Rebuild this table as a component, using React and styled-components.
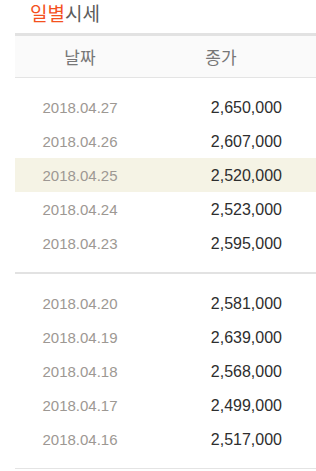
import React from "react";
import styled, { createGlobalStyle } from "styled-components";

const Global = createGlobalStyle`
  html, body { margin: 0; padding: 0; background: #fff; }
  body { font-family: "Liberation Sans", "Noto Sans CJK KR", sans-serif; }
`;

const Page = styled.div`
  padding-left: 15px;
  width: 301px;
`;

const Title = styled.h2`
  margin: 0;
  height: 33px;
  padding-left: 15px;
  font-family: "Noto Sans CJK KR", sans-serif;
  font-size: 19px;
  font-weight: 400;
  line-height: 26px;
  color: #5c5c5c;
  letter-spacing: 0;
`;

const Accent = styled.span`
  color: #f4511e;
`;

const Header = styled.div`
  display: grid;
  grid-template-columns: 130px 1fr;
  height: 41px;
  align-items: center;
  background: #fafafa;
  border-top: 3px solid #e2e2e2;
  border-bottom: 1px solid #e4e4e4;
`;

const HeadCell = styled.div`
  font-family: "Noto Sans CJK KR", sans-serif;
  font-size: 17px;
  line-height: 24px;
  color: #777;
  text-align: center;
  padding-right: ${(p) => (p.$right ? "19px" : "0")};
`;

const Group = styled.div`
  padding: 12px 0;
  border-bottom: ${(p) => (p.$last ? "1px solid #e4e4e4" : "2px solid #e2e2e2")};
`;

const Row = styled.div`
  display: grid;
  grid-template-columns: 130px 1fr;
  height: 34px;
  align-items: center;
  background: ${(p) => (p.$hl ? "#f5f3e5" : "transparent")};
`;

const DateCell = styled.div`
  font-size: 15px;
  color: #9d9893;
  text-align: center;
  line-height: 18px;
  padding-top: 1px;
`;

const PriceCell = styled.div`
  font-size: 16px;
  color: #2e2e2e;
  text-align: right;
  padding-right: 34px;
  line-height: 18px;
  padding-top: 1px;
`;

const groups = [
  [
    ["2018.04.27", "2,650,000"],
    ["2018.04.26", "2,607,000"],
    ["2018.04.25", "2,520,000", true],
    ["2018.04.24", "2,523,000"],
    ["2018.04.23", "2,595,000"],
  ],
  [
    ["2018.04.20", "2,581,000"],
    ["2018.04.19", "2,639,000"],
    ["2018.04.18", "2,568,000"],
    ["2018.04.17", "2,499,000"],
    ["2018.04.16", "2,517,000"],
  ],
];

export default function App() {
  return (
    <Page>
      <Global />
      <Title>
        <Accent>일별</Accent>시세
      </Title>
      <Header>
        <HeadCell>날짜</HeadCell>
        <HeadCell $right>종가</HeadCell>
      </Header>
      {groups.map((g, gi) => (
        <Group key={gi} $last={gi === groups.length - 1}>
          {g.map(([d, p, hl]) => (
            <Row key={d} $hl={hl}>
              <DateCell>{d}</DateCell>
              <PriceCell>{p}</PriceCell>
            </Row>
          ))}
        </Group>
      ))}
    </Page>
  );
}
